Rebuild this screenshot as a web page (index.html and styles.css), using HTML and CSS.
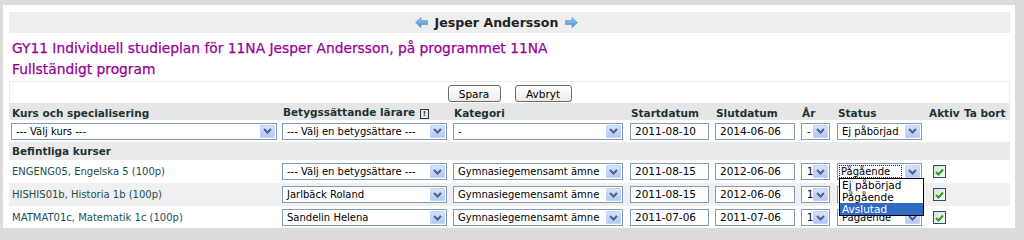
FILE: index.html
```html
<!DOCTYPE html>
<html lang="sv">
<head>
<meta charset="utf-8">
<title>Individuell studieplan</title>
<link rel="stylesheet" href="styles.css">
</head>
<body>
<div class="page">
  <div class="namebar">
    <svg class="arrow" width="13" height="11" viewBox="0 0 13 11"><defs><linearGradient id="ga" x1="0" y1="0" x2="0" y2="1"><stop offset="0" stop-color="#a9d4f5"/><stop offset="1" stop-color="#3c86cc"/></linearGradient></defs><path d="M0.5 5.5 L6 0.5 L6 3.5 L12.5 3.5 L12.5 7.5 L6 7.5 L6 10.5 Z" fill="url(#ga)" stroke="#4a8fd0" stroke-width="0.6"/></svg>
    <span class="name">Jesper Andersson</span>
    <svg class="arrow" width="13" height="11" viewBox="0 0 13 11"><defs><linearGradient id="gb" x1="0" y1="0" x2="0" y2="1"><stop offset="0" stop-color="#a9d4f5"/><stop offset="1" stop-color="#3c86cc"/></linearGradient></defs><path d="M12.5 5.5 L7 0.5 L7 3.5 L0.5 3.5 L0.5 7.5 L7 7.5 L7 10.5 Z" fill="url(#gb)" stroke="#4a8fd0" stroke-width="0.6"/></svg>
  </div>
  <h1 class="title">GY11 Individuell studieplan för 11NA Jesper Andersson, på programmet 11NA<br>Fullständigt program</h1>
  <div class="btnrow">
    <button class="btn">Spara</button>
    <button class="btn">Avbryt</button>
  </div>
  <table class="plan">
    <colgroup>
      <col class="c1"><col class="c2"><col class="c3"><col class="c4"><col class="c5"><col class="c6"><col class="c7"><col class="c8"><col class="c9">
    </colgroup>
    <tr class="head">
      <th>Kurs och specialisering</th>
      <th>Betygssättande lärare <span class="info">!</span></th>
      <th>Kategori</th>
      <th>Startdatum</th>
      <th>Slutdatum</th>
      <th>År</th>
      <th>Status</th>
      <th>Aktiv</th>
      <th>Ta bort</th>
    </tr>
    <tr class="filter">
      <td><span class="sel s1"><span class="sel-t">--- Välj kurs ---</span><span class="sel-b"><svg width="9" height="6" viewBox="0 0 9 6"><path d="M1 1 L4.5 4.5 L8 1" fill="none" stroke="#4d6185" stroke-width="2"/></svg></span></span></td>
      <td><span class="sel s2"><span class="sel-t">--- Välj en betygsättare ---</span><span class="sel-b"><svg width="9" height="6" viewBox="0 0 9 6"><path d="M1 1 L4.5 4.5 L8 1" fill="none" stroke="#4d6185" stroke-width="2"/></svg></span></span></td>
      <td><span class="sel s3"><span class="sel-t">-</span><span class="sel-b"><svg width="9" height="6" viewBox="0 0 9 6"><path d="M1 1 L4.5 4.5 L8 1" fill="none" stroke="#4d6185" stroke-width="2"/></svg></span></span></td>
      <td><span class="inp i1">2011-08-10</span></td>
      <td><span class="inp i2">2014-06-06</span></td>
      <td><span class="sel s6"><span class="sel-t">-</span><span class="sel-b"><svg width="9" height="6" viewBox="0 0 9 6"><path d="M1 1 L4.5 4.5 L8 1" fill="none" stroke="#4d6185" stroke-width="2"/></svg></span></span></td>
      <td><span class="sel s7"><span class="sel-t">Ej påbörjad</span><span class="sel-b"><svg width="9" height="6" viewBox="0 0 9 6"><path d="M1 1 L4.5 4.5 L8 1" fill="none" stroke="#4d6185" stroke-width="2"/></svg></span></span></td>
      <td></td>
      <td></td>
    </tr>
    <tr class="group">
      <th colspan="9">Befintliga kurser</th>
    </tr>
    <tr class="row">
      <td class="course">ENGENG05, Engelska 5 (100p)</td>
      <td><span class="sel s2"><span class="sel-t">--- Välj en betygsättare ---</span><span class="sel-b"><svg width="9" height="6" viewBox="0 0 9 6"><path d="M1 1 L4.5 4.5 L8 1" fill="none" stroke="#4d6185" stroke-width="2"/></svg></span></span></td>
      <td><span class="sel s3"><span class="sel-t">Gymnasiegemensamt ämne</span><span class="sel-b"><svg width="9" height="6" viewBox="0 0 9 6"><path d="M1 1 L4.5 4.5 L8 1" fill="none" stroke="#4d6185" stroke-width="2"/></svg></span></span></td>
      <td><span class="inp i1">2011-08-15</span></td>
      <td><span class="inp i2">2012-06-06</span></td>
      <td><span class="sel s6"><span class="sel-t">1</span><span class="sel-b"><svg width="9" height="6" viewBox="0 0 9 6"><path d="M1 1 L4.5 4.5 L8 1" fill="none" stroke="#4d6185" stroke-width="2"/></svg></span></span></td>
      <td class="status-cell">
        <span class="sel s7 open"><span class="sel-t">Pågående</span><span class="sel-b"><svg width="9" height="6" viewBox="0 0 9 6"><path d="M1 1 L4.5 4.5 L8 1" fill="none" stroke="#4d6185" stroke-width="2"/></svg></span></span>
        <ul class="listbox">
          <li>Ej påbörjad</li>
          <li>Pågående</li>
          <li class="hl">Avslutad</li>
        </ul>
      </td>
      <td><span class="chk"><svg width="9" height="8" viewBox="0 0 9 8"><path d="M1 4 L3.5 6.5 L8 1.5" fill="none" stroke="#21a121" stroke-width="2"/></svg></span></td>
      <td></td>
    </tr>
    <tr class="row alt">
      <td class="course">HISHIS01b, Historia 1b (100p)</td>
      <td><span class="sel s2"><span class="sel-t">Jarlbäck Roland</span><span class="sel-b"><svg width="9" height="6" viewBox="0 0 9 6"><path d="M1 1 L4.5 4.5 L8 1" fill="none" stroke="#4d6185" stroke-width="2"/></svg></span></span></td>
      <td><span class="sel s3"><span class="sel-t">Gymnasiegemensamt ämne</span><span class="sel-b"><svg width="9" height="6" viewBox="0 0 9 6"><path d="M1 1 L4.5 4.5 L8 1" fill="none" stroke="#4d6185" stroke-width="2"/></svg></span></span></td>
      <td><span class="inp i1">2011-08-15</span></td>
      <td><span class="inp i2">2012-06-06</span></td>
      <td><span class="sel s6"><span class="sel-t">1</span><span class="sel-b"><svg width="9" height="6" viewBox="0 0 9 6"><path d="M1 1 L4.5 4.5 L8 1" fill="none" stroke="#4d6185" stroke-width="2"/></svg></span></span></td>
      <td><span class="sel s7"><span class="sel-t">Pågående</span><span class="sel-b"><svg width="9" height="6" viewBox="0 0 9 6"><path d="M1 1 L4.5 4.5 L8 1" fill="none" stroke="#4d6185" stroke-width="2"/></svg></span></span></td>
      <td><span class="chk"><svg width="9" height="8" viewBox="0 0 9 8"><path d="M1 4 L3.5 6.5 L8 1.5" fill="none" stroke="#21a121" stroke-width="2"/></svg></span></td>
      <td></td>
    </tr>
    <tr class="row">
      <td class="course">MATMAT01c, Matematik 1c (100p)</td>
      <td><span class="sel s2"><span class="sel-t">Sandelin Helena</span><span class="sel-b"><svg width="9" height="6" viewBox="0 0 9 6"><path d="M1 1 L4.5 4.5 L8 1" fill="none" stroke="#4d6185" stroke-width="2"/></svg></span></span></td>
      <td><span class="sel s3"><span class="sel-t">Gymnasiegemensamt ämne</span><span class="sel-b"><svg width="9" height="6" viewBox="0 0 9 6"><path d="M1 1 L4.5 4.5 L8 1" fill="none" stroke="#4d6185" stroke-width="2"/></svg></span></span></td>
      <td><span class="inp i1">2011-07-06</span></td>
      <td><span class="inp i2">2011-07-06</span></td>
      <td><span class="sel s6"><span class="sel-t">1</span><span class="sel-b"><svg width="9" height="6" viewBox="0 0 9 6"><path d="M1 1 L4.5 4.5 L8 1" fill="none" stroke="#4d6185" stroke-width="2"/></svg></span></span></td>
      <td><span class="sel s7"><span class="sel-t">Pågående</span><span class="sel-b"><svg width="9" height="6" viewBox="0 0 9 6"><path d="M1 1 L4.5 4.5 L8 1" fill="none" stroke="#4d6185" stroke-width="2"/></svg></span></span></td>
      <td><span class="chk"><svg width="9" height="8" viewBox="0 0 9 8"><path d="M1 4 L3.5 6.5 L8 1.5" fill="none" stroke="#21a121" stroke-width="2"/></svg></span></td>
      <td></td>
    </tr>
  </table>
</div>
</body>
</html>
```

FILE: styles.css
```css
html, body {
  margin: 0;
  padding: 0;
  background: #dcdcdc;
  height: 228px;
  overflow: hidden;
}

body {
  font-family: "DejaVu Sans", Verdana, sans-serif;
  font-size: 10px;
  color: #000;
}

.page {
  margin: 5px 9px 0 3px;
  background: #fff;
  padding: 7px 5px 0 6px;
  height: 216px;
  overflow: hidden;
}

.namebar {
  height: 21px;
  background: #eeeeee;
  display: flex;
  align-items: center;
  justify-content: center;
  gap: 7px;
  padding-right: 26px;
}

.name {
  font-weight: bold;
  font-size: 12.6px;
  color: #222;
}

.arrow {
  display: block;
}

.title {
  margin: 0;
  padding: 5px 3px 0 3px;
  height: 43px;
  font-size: 13.8px;
  font-weight: normal;
  line-height: 21px;
  color: #990099;
  -webkit-text-stroke: 0.25px #990099;
}

.btnrow {
  border: 1px solid #ececec;
  border-bottom: none;
  height: 21px;
  display: flex;
  justify-content: center;
  align-items: flex-end;
  gap: 14px;
}

.btn {
  font-family: "DejaVu Sans", Verdana, sans-serif;
  font-size: 10.5px;
  height: 17px;
  padding: 0 6px;
  border: 1px solid #6b6b6b;
  border-radius: 3px;
  background: linear-gradient(#ffffff, #ecebe6);
  color: #000;
  margin-bottom: 1px;
}

.btn:first-child {
  width: 53px;
}

.btn:last-child {
  width: 57px;
}

.plan {
  border-collapse: collapse;
  table-layout: fixed;
  width: 1001px;
}

.c1 { width: 271px; }
.c2 { width: 171px; }
.c3 { width: 177px; }
.c4 { width: 85px; }
.c5 { width: 86px; }
.c6 { width: 36px; }
.c7 { width: 91px; }
.c8 { width: 35px; }
.c9 { width: 49px; }

.plan th {
  text-align: left;
  font-weight: bold;
  font-size: 10.5px;
  color: #1c3333;
  padding: 0 3px;
  white-space: nowrap;
}

.plan td {
  padding: 0 2px;
  white-space: nowrap;
  vertical-align: middle;
}

.head {
  height: 17px;
  background: #e6e6e6;
}

.head th {
  padding-top: 2px;
}

.info {
  display: inline-block;
  width: 7px;
  height: 8px;
  border: 1px solid #333;
  font-size: 7px;
  line-height: 8px;
  text-align: center;
  vertical-align: 0;
  margin-left: 1px;
}

.filter {
  height: 22px;
  background: #fff;
}

.group {
  height: 18px;
  background: #ebebeb;
}

.row {
  height: 23px;
  background: #fff;
}

.row.alt {
  background: #f0f0f0;
}

.course {
  color: #1a4f4f;
  padding-left: 3px !important;
  padding-bottom: 1px !important;
}

.sel {
  display: flex;
  align-items: center;
  box-sizing: border-box;
  height: 17px;
  border: 1px solid #7f9db9;
  background: #fff;
  padding: 1px;
  font-size: 10px;
}

.sel-t {
  flex: 1;
  padding-left: 3px;
  overflow: hidden;
  white-space: nowrap;
  line-height: 13px;
}

.sel-b {
  width: 15px;
  height: 13px;
  flex: none;
  box-sizing: border-box;
  background: linear-gradient(#d6e2fc, #b4c8f5);
  border: 1px solid #c3d3fd;
  border-radius: 1px;
  display: flex;
  align-items: center;
  justify-content: center;
}

.s1 { width: 266px; }
.s2 { width: 165px; }
.s3 { width: 170px; }
.s6 { width: 29px; }
.s7 { width: 85px; }

.s6 .sel-t {
  padding-left: 4px;
}

.inp {
  display: block;
  box-sizing: border-box;
  height: 17px;
  line-height: 15px;
  border: 1px solid #7f9db9;
  background: #fff;
  padding-left: 4px;
  font-size: 10.5px;
}

.i1 { width: 79px; }
.i2 { width: 80px; }

.status-cell {
  position: relative;
}

.open .sel-t {
  outline: 1px dotted #222;
  outline-offset: -1px;
  margin-right: 3px;
  padding-left: 2px;
}

.listbox {
  position: absolute;
  left: 4px;
  top: 18px;
  width: 85px;
  box-sizing: border-box;
  margin: 0;
  padding: 0;
  list-style: none;
  background: #fff;
  border: 1px solid #000;
  font-size: 10.5px;
  line-height: 12px;
  z-index: 2;
}

.listbox li {
  padding-left: 2px;
}

.listbox .hl {
  background: #316ac5;
  color: #fff;
}

.chk {
  display: flex;
  align-items: center;
  justify-content: center;
  width: 13px;
  height: 13px;
  box-sizing: border-box;
  border: 1px solid #1c5180;
  background: linear-gradient(135deg, #dcdcd7, #ffffff);
  margin-left: 5px;
}
```
